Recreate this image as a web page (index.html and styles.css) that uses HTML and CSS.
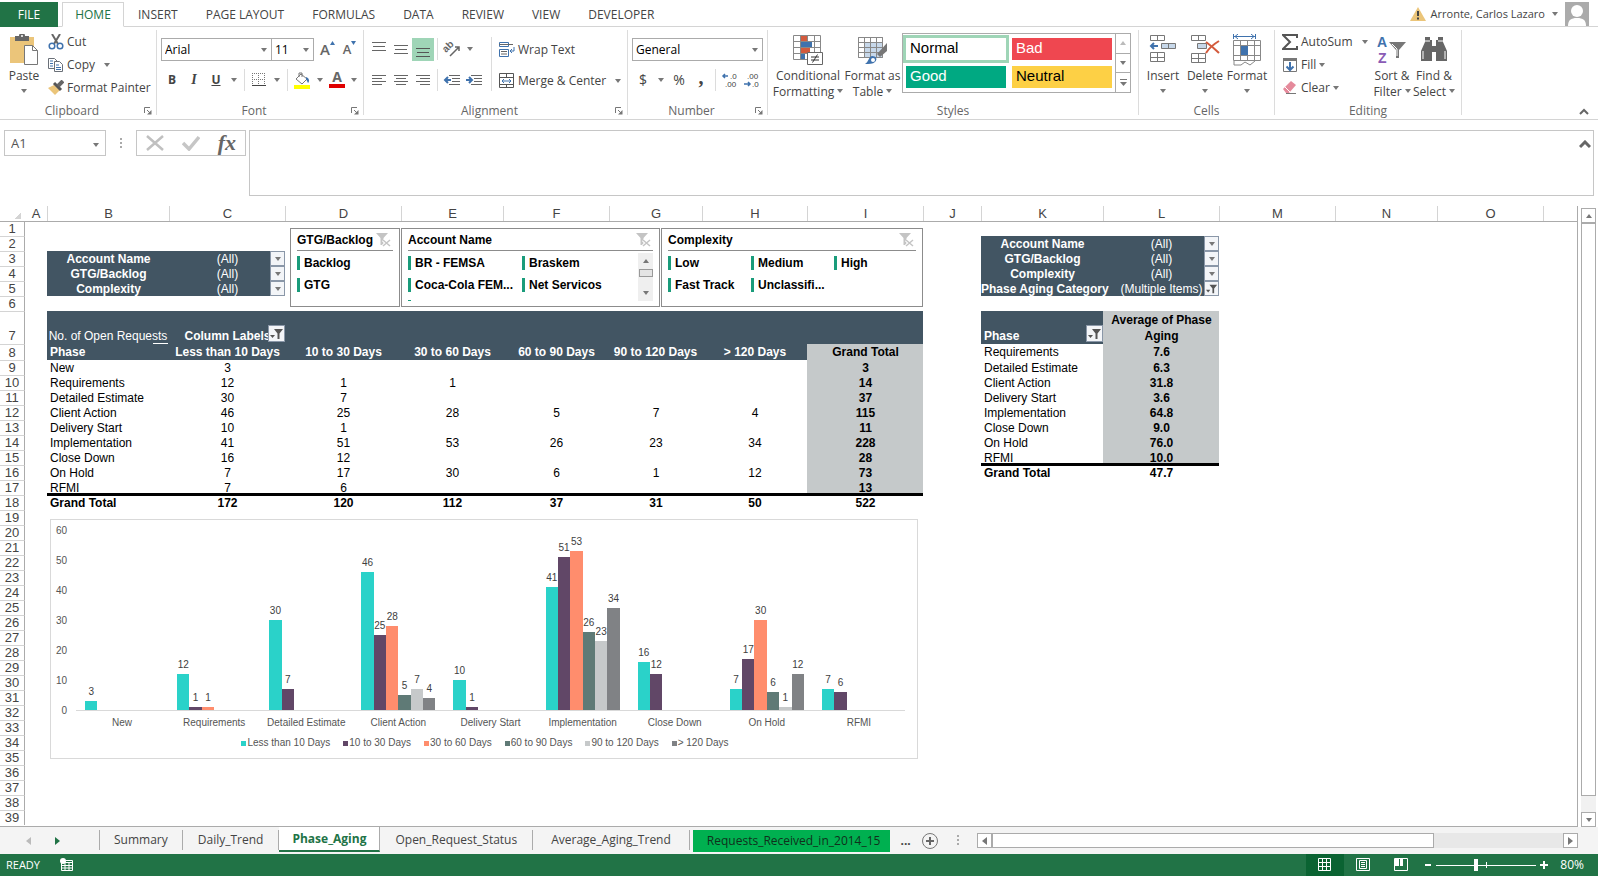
FILE: index.html
```
<!DOCTYPE html>
<html lang="en">
<head>
    <meta charset="UTF-8">
    <title>Phase_Aging</title>
    <link rel="stylesheet" href="styles.css">
</head>
<body>
<!-- shared icons -->
<svg class="sprite" aria-hidden="true">
    <symbol id="launcher" viewBox="0 0 8 8"><path d="M.5 6V.5H6M3 3l3 3" fill="none" stroke="#777"/><path d="M7.500 3v4.500H3z" fill="#777"/></symbol>
    <symbol id="funnel" viewBox="0 0 14 14"><path d="M4 2h9L9.500 6.500V12h-2V6.500z" fill="#555"/><path d="M0 8h5L2.500 11z" fill="#555"/></symbol>
    <symbol id="clear" viewBox="0 0 16 16"><path d="M1 1h12L8.500 6v7h-3V6z" fill="#c4c4c4"/><path d="M8 8l7 6M15 8l-7 6" stroke="#fff" stroke-width="3"/><path d="M8 8l7 6M15 8l-7 6" stroke="#c4c4c4" stroke-width="1.500"/></symbol>
</svg>

<header class="tabs">
    <button class="tab file">FILE</button>
    <button class="tab home">HOME</button>
    <button class="tab">INSERT</button>
    <button class="tab">PAGE LAYOUT</button>
    <button class="tab">FORMULAS</button>
    <button class="tab">DATA</button>
    <button class="tab">REVIEW</button>
    <button class="tab">VIEW</button>
    <button class="tab">DEVELOPER</button>
    <div class="user">
        <svg width="16" height="14" viewBox="0 0 16 14"><path d="M8 0l8 14H0z" fill="#ebc57a"/><path d="M8 4v5M8 10.500v2" stroke="#444" stroke-width="2"/></svg>
        <button class="account">Arronte, Carlos Lazaro<i class="arr"></i></button>
        <svg width="24" height="24" viewBox="0 0 24 24"><path d="M0 0h24v24H0z" fill="#ababab"/><circle cx="12" cy="9" r="6" fill="#fff"/><path d="M3 24c0-6 3-8 9-8s9 2 9 8z" fill="#fff"/></svg>
    </div>
</header>

<div class="ribbon">
    <section class="group clipboard">
        <div class="body">
            <button class="big paste">
                <svg width="32" height="32" viewBox="0 0 32 32"><path d="M2 3h24v26H2z" fill="#ebc57a"/><path d="M7 2h4a3 3 0 0 1 6 0h4v5H7z" fill="#666"/><circle cx="14" cy="2" r="1" fill="#fff"/><path d="M16.500 11.500h8l5 5v14h-13z" fill="#fff" stroke="#777"/><path d="M24.500 11.500v5h5" fill="none" stroke="#777"/></svg>
                <span>Paste</span><i class="arr"></i>
            </button>
            <div class="stack">
                <button class="small"><svg width="16" height="16" viewBox="0 0 16 16"><path d="M4 0l6 10M12 0L6 10" stroke="#666" stroke-width="2"/><g fill="none" stroke="#3f72ad" stroke-width="1.500"><circle cx="4" cy="12" r="2.800"/><circle cx="12" cy="12" r="2.800"/></g></svg>Cut</button>
                <button class="small"><svg width="16" height="16" viewBox="0 0 16 16"><g fill="#fff" stroke="#6a7078"><path d="M.5 1.500h6l3 3v7h-9z"/><path d="M6.500 4.500h5l3 3v7h-8z"/></g><path d="M2 4h3M2 6.500h3M2 9h3M8 8h3M8 10.500h5M8 12.500h5" stroke="#3f72ad"/></svg>Copy<i class="arr"></i></button>
                <button class="small"><svg width="16" height="16" viewBox="0 0 16 16"><path d="M6 5l6 5-5 5L0 8z" fill="#ebc57a"/><path d="M6 3l7 7" stroke="#555" stroke-width="3"/><path d="M10 6l5-5" stroke="#666" stroke-width="4"/></svg>Format Painter</button>
            </div>
        </div>
        <div class="title"><span>Clipboard</span><button class="launch" aria-label="Clipboard options"><svg width="8" height="8"><use href="#launcher"/></svg></button></div>
    </section>

    <section class="group font">
        <div class="body lines">
            <div class="line">
                <select class="combo face" aria-label="Font"><option>Arial</option></select>
                <select class="combo size" aria-label="Font size"><option>11</option></select>
                <button class="tool grow">A<svg width="5" height="4"><path d="M0 4l2.500-4L5 4z" fill="#3f72ad"/></svg></button>
                <button class="tool shrink">A<svg width="5" height="4"><path d="M0 0h5L2.500 4z" fill="#3f72ad"/></svg></button>
            </div>
            <div class="line">
                <button class="tool bold">B</button>
                <button class="tool italic">I</button>
                <button class="tool under">U</button>
                <button class="drop" aria-label="Underline style"><i class="arr"></i></button>
                <i class="sep"></i>
                <button class="tool" aria-label="Borders"><svg width="14" height="14" viewBox="0 0 14 14"><path d="M.5 0v13M6.500 0v13M12.500 0v13M0 .5h13M0 6.500h13" stroke="#777" stroke-dasharray="1 1"/><path d="M0 12.500h14" stroke="#444"/></svg></button>
                <button class="drop" aria-label="More borders"><i class="arr"></i></button>
                <i class="sep"></i>
                <button class="tool" aria-label="Fill color"><svg width="18" height="17" viewBox="0 0 18 17"><path d="M8 2l6 5-5 5-6-5zM6 5V1h3v4" fill="#fff" stroke="#777"/><path d="M13 5c3 1 4 4 2 6l-2-4z" fill="#3f72ad"/><path d="M1 13h16v4H1z" fill="#ff0"/></svg></button>
                <button class="drop" aria-label="More fills"><i class="arr"></i></button>
                <button class="tool fontcolor">A</button>
                <button class="drop" aria-label="More font colors"><i class="arr"></i></button>
            </div>
        </div>
        <div class="title"><span>Font</span><button class="launch" aria-label="Font options"><svg width="8" height="8"><use href="#launcher"/></svg></button></div>
    </section>

    <section class="group align">
        <div class="body">
            <div class="lines">
                <div class="line">
                    <button class="tool" aria-label="Top align"><svg width="14" height="14"><path d="M0 .5h14M1 4.500h12M0 8.500h14" stroke="#666"/></svg></button>
                    <button class="tool" aria-label="Middle align"><svg width="14" height="14"><path d="M0 3.500h14M1 7.500h12M0 11.500h14" stroke="#666"/></svg></button>
                    <button class="tool on" aria-label="Bottom align"><svg width="14" height="14"><path d="M0 5.500h14M1 9.500h12M0 13.500h14" stroke="#555"/></svg></button>
                    <i class="sep"></i>
                    <button class="tool" aria-label="Orientation"><svg width="22" height="22" viewBox="0 0 22 22"><text x="5" y="15" transform="rotate(-45 5 15)" font-family="Liberation Sans" font-size="10" font-weight="bold" fill="#666">ab</text><path d="M9 18l9-9M14 9h4v4" fill="none" stroke="#666" stroke-width="1.500"/></svg></button>
                    <button class="drop" aria-label="More orientations"><i class="arr"></i></button>
                </div>
                <div class="line">
                    <button class="tool" aria-label="Align left"><svg width="14" height="12"><path d="M0 1.500h14M0 4.500h10M0 7.500h14M0 10.500h10" stroke="#666"/></svg></button>
                    <button class="tool" aria-label="Center"><svg width="14" height="12"><path d="M0 1.500h14M2 4.500h10M0 7.500h14M2 10.500h10" stroke="#666"/></svg></button>
                    <button class="tool" aria-label="Align right"><svg width="14" height="12"><path d="M0 1.500h14M4 4.500h10M0 7.500h14M4 10.500h10" stroke="#666"/></svg></button>
                    <i class="sep"></i>
                    <button class="tool" aria-label="Decrease indent"><svg width="16" height="12"><path d="M5 1.500h11M8 4.500h8M8 7.500h8M5 10.500h11" stroke="#666"/><path d="M1 6h6M4 3L1 6l3 3" fill="none" stroke="#3f72ad" stroke-width="2"/></svg></button>
                    <button class="tool" aria-label="Increase indent"><svg width="16" height="12"><path d="M5 1.500h11M8 4.500h8M8 7.500h8M5 10.500h11" stroke="#666"/><path d="M0 6h6M3 3l3 3-3 3" fill="none" stroke="#3f72ad" stroke-width="2"/></svg></button>
                </div>
            </div>
            <i class="sep tall"></i>
            <div class="lines wrapcol">
                <button class="small"><svg width="16" height="16" viewBox="0 0 16 16"><path d="M.5.500h9v4h-9zM.5 7.500h9v7h-9z" fill="#fff" stroke="#3f72ad"/><path d="M0 2.500h14M2 9.500h6M2 12h6" stroke="#666"/><path d="M15 5v4h-4M13 7l-2 2 2 2" fill="none" stroke="#3f72ad"/></svg>Wrap Text</button>
                <button class="small"><svg width="16" height="16" viewBox="0 0 16 16"><path d="M.5.500h14v14H.5zM0 4.500h15M0 11.500h15M7.500 0v4M7.500 11v4" fill="none" stroke="#555"/><path d="M3 8h9M5 6L3 8l2 2M10 6l2 2-2 2" fill="none" stroke="#3f72ad"/></svg>Merge &amp; Center<i class="arr"></i></button>
            </div>
        </div>
        <div class="title"><span>Alignment</span><button class="launch" aria-label="Alignment options"><svg width="8" height="8"><use href="#launcher"/></svg></button></div>
    </section>

    <section class="group number">
        <div class="body lines">
            <div class="line"><select class="combo format" aria-label="Number format"><option>General</option></select></div>
            <div class="line">
                <button class="tool sign">$</button>
                <button class="drop" aria-label="Currencies"><i class="arr"></i></button>
                <button class="tool sign">%</button>
                <button class="tool comma">,</button>
                <i class="sep"></i>
                <button class="tool" aria-label="Increase decimal"><svg width="16" height="16" viewBox="0 0 16 16"><path d="M1 4h5M3 2L1 4l2 2" fill="none" stroke="#3f72ad" stroke-width="1.500"/><g font-family="Liberation Sans" font-size="8" fill="#444"><text x="8" y="7">.0</text><text x="3" y="15">.00</text></g></svg></button>
                <button class="tool" aria-label="Decrease decimal"><svg width="16" height="16" viewBox="0 0 16 16"><path d="M0 12h6M4 10l2 2-2 2" fill="none" stroke="#3f72ad" stroke-width="1.500"/><g font-family="Liberation Sans" font-size="8" fill="#444"><text x="3" y="7">.00</text><text x="8" y="15">.0</text></g></svg></button>
            </div>
        </div>
        <div class="title"><span>Number</span><button class="launch" aria-label="Number options"><svg width="8" height="8"><use href="#launcher"/></svg></button></div>
    </section>

    <section class="group styles">
        <div class="body">
            <button class="big cond">
                <svg width="30" height="32" viewBox="0 0 30 32"><path d="M.5 1.500h27v24H.5zM0 7.500h28M0 13.500h28M0 19.500h28M7.500 1v24M14.500 1v24M21.500 1v24" fill="#fff" stroke="#888"/><path d="M8 2h6v5H8zM8 14h9v5H8z" fill="#d35b3d"/><path d="M8 8h11v5H8zM8 20h4v5H8z" fill="#3f72ad"/><path d="M14.500 18.500h15v12h-15z" fill="#fff" stroke="#666"/><path d="M18 23h8M18 26h8M24.500 20.500l-5 8" stroke="#333"/></svg>
                <span>Conditional<br>Formatting<i class="arr"></i></span>
            </button>
            <button class="big astable">
                <svg width="30" height="32" viewBox="0 0 30 32"><path d="M.5 3.500h24v20H.5z" fill="#fff" stroke="#888"/><path d="M7 8h18v15H7z" fill="#c7d8ea"/><path d="M.5 3.500h24v20H.5zM0 8.500h24M0 13.500h24M0 18.500h24M6.500 3v20M12.500 3v20M18.500 3v20" fill="none" stroke="#888"/><path d="M29 9v8l-7 6-3-3z" fill="#777"/><path d="M7 30c4-2 3-7 7-8 4 0 6 3 3 6-2 2-6 2-10 2z" fill="#3f72ad"/><circle cx="15" cy="26" r="2" fill="#fff"/></svg>
                <span>Format as<br>Table<i class="arr"></i></span>
            </button>
            <div class="gallery">
                <div class="swatches">
                    <button class="swatch normal">Normal</button>
                    <button class="swatch bad">Bad</button>
                    <button class="swatch good">Good</button>
                    <button class="swatch neutral">Neutral</button>
                </div>
                <div class="gscroll">
                    <button aria-label="Previous styles"><i class="arr up pale"></i></button>
                    <button aria-label="Next styles"><i class="arr"></i></button>
                    <button aria-label="More styles"><svg width="7" height="7"><path d="M0 .5h7" stroke="#777"/><path d="M0 3h7L3.500 7z" fill="#777"/></svg></button>
                </div>
            </div>
        </div>
        <div class="title"><span>Styles</span></div>
    </section>

    <section class="group cells">
        <div class="body">
            <button class="big">
                <svg width="28" height="32" viewBox="0 0 28 32"><path d="M1.500 1.500h14v5h-14zM8.500 1v5M1.500 18.500h14v9h-14zM1 23.500h14M8.500 18v9" fill="#fff" stroke="#777"/><path d="M12.500 9.500h14v5h-14zM19.500 9v5" fill="#c7d8ea" stroke="#777"/><path d="M2 12h7M5 9l-3 3 3 3" fill="none" stroke="#3f72ad" stroke-width="2"/></svg>
                <span>Insert</span><i class="arr"></i>
            </button>
            <button class="big">
                <svg width="30" height="32" viewBox="0 0 30 32"><path d="M1.500 1.500h14v5h-14zM8.500 1v5M1.500 19.500h14v9h-14zM1 24.500h14M8.500 19v9" fill="#fff" stroke="#777"/><path d="M7.500 9.500h9v5h-9z" fill="#c7d8ea" stroke="#777"/><path d="M16 8c4 3 9 7 13 11M29 7c-5 3-10 7-13 12" fill="none" stroke="#d35b3d" stroke-width="2"/></svg>
                <span>Delete</span><i class="arr"></i>
            </button>
            <button class="big">
                <svg width="30" height="32" viewBox="0 0 30 32"><path d="M1.500 0v5M23.500 0v5M2 2.500h21M6 0L3 2.500 6 5M19 0l3 2.500L19 5" fill="none" stroke="#3f72ad"/><path d="M1.500 6.500h27v20h-27zM1 11.500h27M1 21.500h27M8.500 6v20M15.500 6v20M22.500 6v20M2 27v4h7l4-3 5 3 5-4" fill="#fff" stroke="#888"/><path d="M9 12h7v9H9z" fill="#3f72ad"/></svg>
                <span>Format</span><i class="arr"></i>
            </button>
        </div>
        <div class="title"><span>Cells</span></div>
    </section>

    <section class="group editing">
        <div class="body">
            <div class="stack">
                <button class="small sum"><svg width="16" height="16" viewBox="0 0 16 16"><path d="M15 4V1H1l7 7-7 7h14v-3" fill="none" stroke="#555" stroke-width="2"/></svg>AutoSum<i class="arr"></i></button>
                <button class="small"><svg width="16" height="16" viewBox="0 0 16 16"><path d="M1.500 1.500h13v13h-13z" fill="#fff" stroke="#777"/><path d="M1 1h14v3H1z" fill="#777"/><path d="M8 5v8M4.500 9.500L8 13l3.500-3.500" fill="none" stroke="#3f72ad" stroke-width="2"/></svg>Fill<i class="arr"></i></button>
                <button class="small"><svg width="16" height="16" viewBox="0 0 16 16"><path d="M9 1l5 4-7 8H4L1 9z" fill="#e58a9b"/><path d="M3 7l5 5" stroke="#fff"/><path d="M4 13.500h10" stroke="#777"/></svg>Clear<i class="arr"></i></button>
            </div>
            <button class="big">
                <svg width="30" height="32" viewBox="0 0 30 32"><g font-family="Liberation Sans" font-size="14" font-weight="bold"><text x="0" y="13" fill="#3f72ad">A</text><text x="1" y="29" fill="#8a5bb5">Z</text></g><path d="M12 8h17l-7 8v8h-3v-8z" fill="#777"/><path d="M15 10l5 5v7" fill="none" stroke="#fff"/></svg>
                <span>Sort &amp;<br>Filter<i class="arr"></i></span>
            </button>
            <button class="big">
                <svg width="28" height="32" viewBox="0 0 28 32"><path d="M5 3h5v3h2v6h4V6h2V3h5v5l4 9v10H16v-9h-4v9H1V17l4-9z" fill="#666"/><path d="M5 7h5M18 7h5M3 17v8M25 17v8" stroke="#fff"/></svg>
                <span>Find &amp;<br>Select<i class="arr"></i></span>
            </button>
        </div>
        <div class="title"><span>Editing</span></div>
    </section>
    <button class="collapse" aria-label="Collapse the ribbon"><svg width="10" height="7"><path d="M1 6l4-4 4 4" fill="none" stroke="#666" stroke-width="2"/></svg></button>
</div>

<div class="formula">
    <div class="namebox"><input type="text" value="A1" aria-label="Name box"><button aria-label="Names"><i class="arr"></i></button></div>
    <i class="dots"></i>
    <div class="fx">
        <button aria-label="Cancel"><svg width="18" height="16"><path d="M1 1l16 14M17 1L1 15" stroke="#c0c0c0" stroke-width="2.500"/></svg></button>
        <button aria-label="Enter"><svg width="18" height="16"><path d="M1 8l6 6L17 2" fill="none" stroke="#c6c6c6" stroke-width="3.500"/></svg></button>
        <button class="fn">fx</button>
    </div>
    <div class="entry">
        <textarea aria-label="Formula bar"></textarea>
        <button aria-label="Collapse formula bar"><svg width="12" height="9"><path d="M1 7l5-5 5 5" fill="none" stroke="#666" stroke-width="3"/></svg></button>
    </div>
</div>

<main class="work">
    <div class="sheet">
        <table class="grid">
            <colgroup>
                <col class="w-head"><col class="w-a"><col class="w-b"><col class="w-c"><col class="w-c"><col class="w-e"><col class="w-f"><col class="w-g"><col class="w-h"><col class="w-i"><col class="w-j"><col class="w-b"><col class="w-c"><col class="w-c"><col class="w-e"><col class="w-f"><col>
            </colgroup>
            <thead>
            <tr><th class="corner"></th><th class="first">A</th><th>B</th><th>C</th><th>D</th><th>E</th><th>F</th><th>G</th><th>H</th><th>I</th><th>J</th><th>K</th><th>L</th><th>M</th><th>N</th><th>O</th><th></th></tr>
            </thead>
            <tbody>
            <tr class="top"><th>1</th><td colspan="16"></td></tr>
            <tr><th>2</th><td colspan="10"></td><td class="dk b">Account Name</td><td class="dk">(All)<button class="pick" aria-label="Filter"><i class="arr"></i></button></td><td colspan="4"></td></tr>
            <tr><th>3</th><td></td><td class="dk b">Account Name</td><td class="dk">(All)<button class="pick" aria-label="Filter"><i class="arr"></i></button></td><td colspan="7"></td><td class="dk b">GTG/Backlog</td><td class="dk">(All)<button class="pick" aria-label="Filter"><i class="arr"></i></button></td><td colspan="4"></td></tr>
            <tr><th>4</th><td></td><td class="dk b">GTG/Backlog</td><td class="dk">(All)<button class="pick" aria-label="Filter"><i class="arr"></i></button></td><td colspan="7"></td><td class="dk b">Complexity</td><td class="dk">(All)<button class="pick" aria-label="Filter"><i class="arr"></i></button></td><td colspan="4"></td></tr>
            <tr><th>5</th><td></td><td class="dk b">Complexity</td><td class="dk">(All)<button class="pick" aria-label="Filter"><i class="arr"></i></button></td><td colspan="7"></td><td class="dk b tight over">Phase Aging Category</td><td class="dk">(Multiple Items)<button class="pick" aria-label="Filter"><svg width="12" height="12"><use href="#funnel"/></svg></button></td><td colspan="4"></td></tr>
            <tr><th>6</th><td colspan="16"></td></tr>
            <tr class="r7"><th>7</th><td></td><td class="dk tight mark">No. of Open Requests</td><td class="dk b">Column Labels<button class="pick wide" aria-label="Filter columns"><svg width="14" height="14"><use href="#funnel"/></svg></button></td><td class="dk" colspan="6"></td><td></td><td class="dk b l">Phase<button class="pick wide" aria-label="Filter phases"><svg width="14" height="14"><use href="#funnel"/></svg></button></td><td class="gr b">Average of Phase<br>Aging</td><td colspan="4"></td></tr>
            <tr class="r8"><th>8</th><td></td><td class="dk b l">Phase</td><td class="dk b">Less than 10 Days</td><td class="dk b">10 to 30 Days</td><td class="dk b">30 to 60 Days</td><td class="dk b">60 to 90 Days</td><td class="dk b tight">90 to 120 Days</td><td class="dk b">&gt; 120 Days</td><td class="gr b">Grand Total</td><td></td><td class="l">Requirements</td><td class="gr b">7.6</td><td colspan="4"></td></tr>
            <tr><th>9</th><td></td><td class="l">New</td><td>3</td><td></td><td></td><td></td><td></td><td></td><td class="gr b">3</td><td></td><td class="l">Detailed Estimate</td><td class="gr b">6.3</td><td colspan="4"></td></tr>
            <tr><th>10</th><td></td><td class="l">Requirements</td><td>12</td><td>1</td><td>1</td><td></td><td></td><td></td><td class="gr b">14</td><td></td><td class="l">Client Action</td><td class="gr b">31.8</td><td colspan="4"></td></tr>
            <tr><th>11</th><td></td><td class="l">Detailed Estimate</td><td>30</td><td>7</td><td></td><td></td><td></td><td></td><td class="gr b">37</td><td></td><td class="l">Delivery Start</td><td class="gr b">3.6</td><td colspan="4"></td></tr>
            <tr><th>12</th><td></td><td class="l">Client Action</td><td>46</td><td>25</td><td>28</td><td>5</td><td>7</td><td>4</td><td class="gr b">115</td><td></td><td class="l">Implementation</td><td class="gr b">64.8</td><td colspan="4"></td></tr>
            <tr><th>13</th><td></td><td class="l">Delivery Start</td><td>10</td><td>1</td><td></td><td></td><td></td><td></td><td class="gr b">11</td><td></td><td class="l">Close Down</td><td class="gr b">9.0</td><td colspan="4"></td></tr>
            <tr><th>14</th><td></td><td class="l">Implementation</td><td>41</td><td>51</td><td>53</td><td>26</td><td>23</td><td>34</td><td class="gr b">228</td><td></td><td class="l">On Hold</td><td class="gr b">76.0</td><td colspan="4"></td></tr>
            <tr><th>15</th><td></td><td class="l">Close Down</td><td>16</td><td>12</td><td></td><td></td><td></td><td></td><td class="gr b">28</td><td></td><td class="l last">RFMI</td><td class="gr b last">10.0</td><td colspan="4"></td></tr>
            <tr><th>16</th><td></td><td class="l">On Hold</td><td>7</td><td>17</td><td>30</td><td>6</td><td>1</td><td>12</td><td class="gr b">73</td><td></td><td class="l b sum">Grand Total</td><td class="b sum">47.7</td><td colspan="4"></td></tr>
            <tr><th>17</th><td></td><td class="l last">RFMI</td><td class="last">7</td><td class="last">6</td><td class="last"></td><td class="last"></td><td class="last"></td><td class="last"></td><td class="gr b last">13</td><td colspan="7"></td></tr>
            <tr><th>18</th><td></td><td class="l b sum">Grand Total</td><td class="b sum">172</td><td class="b sum">120</td><td class="b sum">112</td><td class="b sum">37</td><td class="b sum">31</td><td class="b sum">50</td><td class="b sum">522</td><td colspan="7"></td></tr>
            <tr><th>19</th><td colspan="16"></td></tr>
            <tr><th>20</th><td colspan="16"></td></tr>
            <tr><th>21</th><td colspan="16"></td></tr>
            <tr><th>22</th><td colspan="16"></td></tr>
            <tr><th>23</th><td colspan="16"></td></tr>
            <tr><th>24</th><td colspan="16"></td></tr>
            <tr><th>25</th><td colspan="16"></td></tr>
            <tr><th>26</th><td colspan="16"></td></tr>
            <tr><th>27</th><td colspan="16"></td></tr>
            <tr><th>28</th><td colspan="16"></td></tr>
            <tr><th>29</th><td colspan="16"></td></tr>
            <tr><th>30</th><td colspan="16"></td></tr>
            <tr><th>31</th><td colspan="16"></td></tr>
            <tr><th>32</th><td colspan="16"></td></tr>
            <tr><th>33</th><td colspan="16"></td></tr>
            <tr><th>34</th><td colspan="16"></td></tr>
            <tr><th>35</th><td colspan="16"></td></tr>
            <tr><th>36</th><td colspan="16"></td></tr>
            <tr><th>37</th><td colspan="16"></td></tr>
            <tr><th>38</th><td colspan="16"></td></tr>
            <tr><th>39</th><td colspan="16"></td></tr>
            </tbody>
        </table>

        <!-- slicers float over the cells -->
        <div class="slicer s-gtg">
            <h3>GTG/Backlog<svg width="16" height="16"><use href="#clear"/></svg></h3>
            <div class="items"><button>Backlog</button><button>GTG</button></div>
        </div>
        <div class="slicer s-acc">
            <h3>Account Name<svg width="16" height="16"><use href="#clear"/></svg></h3>
            <div class="scroller">
                <div class="items"><button>BR - FEMSA</button><button>Braskem</button><button>Coca-Cola FEM...</button><button>Net Servicos</button><i class="peek"></i></div>
                <div class="mini"><i class="arr up"></i><i class="knob"></i><i class="arr"></i></div>
            </div>
        </div>
        <div class="slicer s-cpx">
            <h3>Complexity<svg width="16" height="16"><use href="#clear"/></svg></h3>
            <div class="items"><button>Low</button><button>Medium</button><button>High</button><button>Fast Track</button><button>Unclassifi...</button></div>
        </div>

        <div class="chart">
            <div class="area">
                <div class="axis"><span>60</span><span>50</span><span>40</span><span>30</span><span>20</span><span>10</span><span>0</span></div>
                <div class="plot" id="plot"></div>
            </div>
            <div class="names" id="names"></div>
            <div class="legend" id="legend"></div>
        </div>
    </div>
    <div class="vscroll">
        <button aria-label="Scroll up"><i class="arr up"></i></button>
        <i class="thumb"></i>
        <button aria-label="Scroll down"><i class="arr"></i></button>
    </div>
</main>

<nav class="sheets">
    <button class="nav" aria-label="Previous sheet"><i class="tri left"></i></button>
    <button class="nav" aria-label="Next sheet"><i class="tri right"></i></button>
    <button class="sh lead">Summary</button>
    <button class="sh">Daily_Trend</button>
    <button class="sh active">Phase_Aging</button>
    <button class="sh">Open_Request_Status</button>
    <button class="sh wide">Average_Aging_Trend</button>
    <button class="sh green">Requests_Received_in_2014_15</button>
    <button class="dotsmore">...</button>
    <button class="add" aria-label="New sheet"><svg width="18" height="18"><circle cx="9" cy="9" r="7.500" fill="none" stroke="#777"/><path d="M9 5v8M5 9h8" stroke="#666" stroke-width="2"/></svg></button>
    <i class="dots"></i>
    <div class="hscroll">
        <button aria-label="Scroll left"><i class="tri left"></i></button>
        <i class="thumb"></i>
        <button aria-label="Scroll right"><i class="tri right"></i></button>
    </div>
</nav>

<footer class="status">
    <span>READY</span>
    <svg class="macro" width="14" height="14" viewBox="0 0 14 14"><path d="M1.500 4.500h11v8h-11zM2 7.500h10M2 10h10M5 5v8M9 5v8M6 2.500h6.500V5" fill="none" stroke="#fff"/><circle cx="3" cy="3" r="3" fill="#fff"/></svg>
    <div class="views">
        <button class="on" aria-label="Normal view"><svg width="14" height="14"><path d="M.5.500h12v12H.5zM4.500 0v13M8.500 0v13M0 4.500h13M0 8.500h13" fill="none" stroke="#fff"/></svg></button>
        <button aria-label="Page layout view"><svg width="14" height="14"><path d="M.5.500h13v12H.5zM3.500 2.500h7v8h-7zM5 4.500h4M5 6.500h4M5 8.500h4" fill="none" stroke="#fff"/></svg></button>
        <button aria-label="Page break view"><svg width="14" height="14"><path d="M.5.500h13v12H.5z" fill="none" stroke="#fff"/><path d="M1 1h4v7H1zM6 1h3v7H6z" fill="#fff"/></svg></button>
    </div>
    <button class="step" aria-label="Zoom out"><svg width="8" height="8"><path d="M1 4h6" stroke="#fff" stroke-width="2"/></svg></button>
    <input class="zoom" type="range" min="0" max="100" value="39" aria-label="Zoom">
    <button class="step" aria-label="Zoom in"><svg width="8" height="8"><path d="M0 4h8M4 0v8" stroke="#fff" stroke-width="2"/></svg></button>
    <span class="pct">80%</span>
</footer>

<script>
    // open requests per phase, one value for each age band
    var bands = ["Less than 10 Days", "10 to 30 Days", "30 to 60 Days", "60 to 90 Days", "90 to 120 Days", "> 120 Days"];
    var phases = [
        {name: "New", values: [3, 0, 0, 0, 0, 0]},
        {name: "Requirements", values: [12, 1, 1, 0, 0, 0]},
        {name: "Detailed Estimate", values: [30, 7, 0, 0, 0, 0]},
        {name: "Client Action", values: [46, 25, 28, 5, 7, 4]},
        {name: "Delivery Start", values: [10, 1, 0, 0, 0, 0]},
        {name: "Implementation", values: [41, 51, 53, 26, 23, 34]},
        {name: "Close Down", values: [16, 12, 0, 0, 0, 0]},
        {name: "On Hold", values: [7, 17, 30, 6, 1, 12]},
        {name: "RFMI", values: [7, 6, 0, 0, 0, 0]}
    ];
    var max = 60;
    var plot = document.getElementById("plot");
    var names = document.getElementById("names");
    var legend = document.getElementById("legend");

    function add(parent, tag, cls, text) {
        var el = document.createElement(tag);
        if (cls) el.className = cls;
        if (text) el.textContent = text;
        parent.appendChild(el);
        return el;
    }

    for (var i = 0; i < phases.length; i++) {
        var cluster = add(plot, "div", "cluster");
        for (var j = 0; j < bands.length; j++) {
            var value = phases[i].values[j];
            var col = add(cluster, "div", "col");
            if (value) {
                add(col, "span", "", String(value));
                add(col, "div", "bar c" + j).style.height = value / max * 100 + "%";
            }
        }
        add(names, "span", "", phases[i].name);
    }
    for (var k = 0; k < bands.length; k++) {
        var item = add(legend, "span", "key");
        add(item, "i", "c" + k);
        item.appendChild(document.createTextNode(bands[k]));
    }
</script>
</body>
</html>
```
FILE: styles.css
```
@charset "UTF-8";
/* reset */
*{box-sizing:border-box;}
body,h3,button,input,select,textarea{margin:0;padding:0;}
body,button,input,select,textarea{font:12px/16px "Open Sans", "Noto Sans", sans-serif;color:#444;}
button{border:0;background:none;white-space:nowrap;cursor:pointer;}
button,input,select,textarea{outline:none;}
svg{display:block;flex:none;}
i{font-style:normal;}
.sprite{position:absolute;width:0;height:0;}

body{
    display:flex;
    flex-direction:column;
    height:100vh;
    overflow:hidden;
    background:#fff;
}
.arr{
    display:inline-block;
    flex:none;
    border:3px solid transparent;
    border-top:4px solid #777;
    border-bottom:0;
}
.arr.up{
    border-top:0;
    border-bottom:4px solid #777;
}
.arr.pale{
    border-bottom-color:#bbb;
}
.tri{
    border:4px solid transparent;
}
.tri.left{
    border-right:5px solid #777;
    border-left:0;
}
.tri.right{
    border-left:5px solid #777;
    border-right:0;
}

/* ribbon tabs */
.tabs{
    display:flex;
    height:27px;
    padding-top:2px;
    border-bottom:1px solid #d4d4d4;
}
.tab{
    height:25px;
    padding:0 14px;
}
.tab.file{
    width:58px;
    padding:0;
    background:#217346;
    color:#fff;
}
.tab.home{
    width:62px;
    height:25px;
    margin-left:4px;
    padding:0;
    border:1px solid #d4d4d4;
    border-bottom:1px solid #fff;
    background:#fff;
    color:#217346;
}
.user{
    display:flex;
    align-items:center;
    gap:5px;
    margin-left:auto;
    padding-right:9px;
}
.account{
    display:flex;
    align-items:center;
    gap:7px;
    margin-right:2px;
    font-size:11px;
}

/* ribbon */
.ribbon{
    display:flex;
    height:93px;
    padding:3px 0 4px;
    border-bottom:1px solid #d4d4d4;
}
.group{
    display:flex;
    flex-direction:column;
    flex:none;
    border-right:1px solid #dcdcdc;
}
.group .body{
    display:flex;
    flex:1;
}
.group .body.lines{
    flex-direction:column;
}
.clipboard{width:157px;}
.font{width:207px;}
.align{width:264px;}
.number{width:140px;}
.styles{width:371px;}
.cells{width:136px;}
.editing{width:187px;}
.title{
    display:flex;
    align-items:center;
    height:16px;
    margin-bottom:-4px;
    color:#666;
}
.title span{
    flex:1;
    text-align:center;
}
.launch{
    width:12px;
    height:16px;
    display:flex;
    align-items:center;
}
.big{
    display:flex;
    flex-direction:column;
    align-items:center;
    width:42px;
    padding-top:4px;
}
.big span{
    margin-top:2px;
}
.big span .arr{
    margin:0 0 3px 3px;
}
.big > .arr{
    margin-top:5px;
}
.paste{width:48px;}
.stack{
    display:flex;
    flex-direction:column;
    align-items:flex-start;
}
.small{
    display:flex;
    align-items:center;
    gap:3px;
    height:23px;
}
.small .arr{
    margin-left:6px;
}
.lines{
    display:flex;
    flex-direction:column;
    gap:9px;
    padding-top:8px;
}
.line{
    display:flex;
    height:22px;
}
.font .body,.number .body,.align .body{
    padding-left:4px;
}
.align .body > .lines{
    width:120px;
}
.align .body > .wrapcol{
    padding:9px 0 0 4px;
}
.wrapcol .small{
    height:22px;
}
.combo{
    height:23px;
    padding-left:3px;
    border:1px solid #ababab;
    border-radius:0;
    appearance:none;
    color:#000;
    background:#fff url("data:image/svg+xml,%3Csvg xmlns='http://www.w3.org/2000/svg' width='6' height='4'%3E%3Cpath d='M0 0h6L3 4z' fill='%23777'/%3E%3C/svg%3E") no-repeat right 4px center;
}
.combo.face{width:111px;}
.combo.size{width:43px;margin-left:-1px;}
.combo.format{width:131px;}
.tool{
    display:flex;
    flex:none;
    align-items:center;
    justify-content:center;
    width:22px;
    height:22px;
}
.tool svg{overflow:visible;}
.tool.on{
    height:23px;
    background:#9fd5b7;
}
.drop{
    display:flex;
    flex:none;
    align-items:center;
    justify-content:center;
    width:14px;
}
.sep{
    flex:none;
    width:7px;
    background:linear-gradient(#dcdcdc,#dcdcdc) center/1px 100% no-repeat;
}
.sep.tall{
    height:54px;
    margin-top:7px;
}
.grow,.shrink{
    align-items:flex-start;
    padding:3px 0 0 5px;
    color:#666;
    font-weight:600;
}
.grow{font-size:15px;}
.shrink{font-size:13px;}
.bold{font-weight:bold;}
.italic{font:italic bold 14px "Liberation Serif", serif;}
.under{font-weight:bold;text-decoration:underline;}
.fontcolor{
    width:16px;
    height:18px;
    margin:1px 2px 0;
    border-bottom:4px solid #e00000;
    font-size:14px;
    font-weight:bold;
    color:#666;
}
.sign{font-size:14px;}
.comma{
    align-items:flex-start;
    font:bold 20px/16px "Liberation Serif", serif;
}
.styles .body{padding-left:5px;}
.cond{width:70px;}
.astable{width:59px;}
.gallery{
    display:flex;
    height:60px;
    margin-top:3px;
    border:1px solid #ababab;
}
.swatches{
    display:grid;
    grid-template-columns:106px 106px;
    grid-template-rows:28px 28px;
    padding-top:1px;
}
.swatch{
    padding:0 0 2px 4px;
    border:3px solid transparent;
    background-clip:padding-box;
    font:15px/20px "Liberation Sans", Arial, sans-serif;
    text-align:left;
}
.swatch.normal{border-color:#9fd5b7;color:#000;}
.swatch.bad{background-color:#ef4750;color:#fff;}
.swatch.good{background-color:#00a982;color:#fff;}
.swatch.neutral{background-color:#fdd045;color:#000;}
.gscroll{
    display:flex;
    flex-direction:column;
    width:15px;
    border-left:1px solid #ababab;
}
.gscroll button{
    display:flex;
    flex:1;
    align-items:center;
    justify-content:center;
}
.gscroll button + button{
    border-top:1px solid #ababab;
}
.cells .body{padding-left:3px;}
.editing .stack{
    width:96px;
    padding-left:7px;
}
.editing .small .arr{margin-left:0;}
.editing .small.sum .arr{margin-left:6px;}
.collapse{
    align-self:flex-end;
    margin:0 9px 0 auto;
}

/* formula bar */
.formula{
    display:flex;
    align-items:flex-start;
    height:86px;
    padding:10px 4px 0;
}
.namebox{
    display:flex;
    align-items:center;
    width:102px;
    height:26px;
    border:1px solid #c6c6c6;
}
.namebox input{
    flex:1;
    min-width:0;
    padding-left:6px;
    border:0;
    font-size:13px;
    color:#555;
}
.namebox button{width:18px;}
.dots{
    width:30px;
    height:10px;
    margin-top:8px;
    background:radial-gradient(circle,#aaa 1px,transparent 1px) center/30px 4px repeat-y;
}
.fx{
    display:flex;
    align-items:center;
    justify-content:space-around;
    width:110px;
    height:26px;
    border:1px solid #c6c6c6;
}
.fx .fn{
    font:italic bold 22px/22px "Liberation Serif", serif;
    color:#666;
}
.entry{
    display:flex;
    align-items:flex-start;
    flex:1;
    height:66px;
    margin-left:3px;
    border:1px solid #c6c6c6;
}
.entry textarea{
    flex:1;
    height:100%;
    border:0;
    resize:none;
}
.entry button{
    padding:9px 2px;
}

/* worksheet */
.work{
    display:flex;
    flex:1;
    min-height:0;
}
.sheet{
    position:relative;
    flex:1;
    min-width:0;
    overflow:hidden;
    border-right:1px solid #ababab;
    border-bottom:1px solid #ababab;
}
.grid{
    width:100%;
    table-layout:fixed;
    border-collapse:separate;
    border-spacing:0;
    font:12px/13px "Liberation Sans", Arial, sans-serif;
    color:#000;
}
.w-head{width:25px;}
.w-a{width:22px;}
.w-b{width:122px;}
.w-c{width:116px;}
.w-e{width:102px;}
.w-f{width:106px;}
.w-g{width:93px;}
.w-h{width:105px;}
.w-i{width:116px;}
.w-j{width:58px;}
.grid th,.grid td{
    height:15px;
    padding:2px 2px 0 3px;
    text-align:center;
    white-space:nowrap;
}
.grid th{
    padding:0;
    font-weight:normal;
    font-size:13px;
    line-height:14px;
    color:#444;
}
.grid thead th{
    border-left:1px solid #d4d4d4;
    line-height:15px;
}
.grid thead .corner,.grid thead .first{
    border-left:0;
}
.grid .corner{
    background:linear-gradient(135deg,transparent 50%,#d4d4d4 50%) 14px 6px/7px 7px no-repeat;
}
.grid tbody th{
    border-top:1px solid #d4d4d4;
    border-right:1px solid #ababab;
}
.grid .top th,.grid .top td{
    border-top:1px solid #ababab;
}
.grid .top td{padding:0;}
.grid .dk{
    position:relative;
    background:#425563;
    color:#fff;
}
.grid .gr{background:#c5c9ca;}
.grid .b{font-weight:bold;}
.grid .l{text-align:left;}
.grid .tight{
    padding-left:0;
    padding-right:0;
}
.grid .over{z-index:1;}
.grid .last{box-shadow:inset 0 -2px #000;}
.grid .sum{box-shadow:inset 0 1px #000;}
.grid .r7 th,.grid .r7 td{
    height:33px;
    padding-top:0;
    line-height:16px;
    vertical-align:bottom;
}
.grid .r8 th,.grid .r8 td{
    height:16px;
    padding-top:1px;
}
.mark::after{
    content:"";
    position:absolute;
    right:1px;
    bottom:0;
    width:15px;
    height:1px;
    background:#fff;
}
.pick{
    position:absolute;
    right:0;
    top:0;
    display:flex;
    align-items:center;
    justify-content:center;
    width:15px;
    height:15px;
    border:1px solid #8a97a8;
    background:#f3f5f8;
}
.pick.wide{
    top:auto;
    bottom:2px;
    width:17px;
    height:17px;
}

/* slicers */
.slicer{
    position:absolute;
    top:22px;
    height:79px;
    padding:3px 6px 0;
    border:1px solid #8c8c8c;
    background:#fff;
    font:bold 12px/16px "Liberation Sans", Arial, sans-serif;
    color:#000;
}
.s-gtg{left:290px;width:110px;}
.s-acc{left:401px;width:259px;}
.s-cpx{left:661px;width:262px;}
.slicer h3{
    display:flex;
    justify-content:space-between;
    height:19px;
    padding-right:2px;
    border-bottom:1px solid #8c8c8c;
    font-size:12px;
}
.items{
    display:grid;
    grid-template-rows:14px 14px;
    gap:8px 0;
    flex:1;
    padding-top:5px;
}
.items button{
    padding-left:4px;
    border-left:3px solid #1a9c7b;
    font:bold 12px/14px "Liberation Sans", Arial, sans-serif;
    text-align:left;
    color:#000;
}
.s-acc .items{grid-template-columns:114px 114px;}
.s-cpx .items{grid-template-columns:83px 83px 83px;}
.scroller{display:flex;}
.peek{
    width:3px;
    height:1px;
    background:#1a9c7b;
}
.mini{
    display:flex;
    flex-direction:column;
    align-items:center;
    justify-content:space-between;
    width:15px;
    height:48px;
    margin-top:2px;
    padding:6px 0;
    background:#efefef;
}
.mini .knob{
    width:14px;
    height:8px;
    margin-bottom:9px;
    border:1px solid #999;
    background:#e4e4e4;
}

/* chart */
.chart{
    position:absolute;
    left:50px;
    top:313px;
    width:868px;
    height:240px;
    padding:5px 12px 0 0;
    border:1px solid #d9d9d9;
    background:#fff;
    font:10px/12px "Liberation Sans", Arial, sans-serif;
    color:#555;
}
.area{display:flex;}
.axis{
    display:flex;
    flex-direction:column;
    justify-content:space-between;
    width:25px;
    height:192px;
    padding-right:9px;
    text-align:right;
}
.plot{
    display:flex;
    flex:1;
    height:181px;
    margin-top:5px;
    border-bottom:1px solid #d9d9d9;
}
.cluster{
    display:flex;
    flex:1;
    padding:0 9px;
}
.col{
    display:flex;
    flex:1;
    min-width:0;
    flex-direction:column;
    align-items:center;
    justify-content:flex-end;
    color:#404040;
}
.col span{margin-bottom:3px;}
.bar{
    flex:none;
    width:100%;
}
.c0{background:#2ad2c9;}
.c1{background:#614767;}
.c2{background:#ff8d6d;}
.c3{background:#5f7a76;}
.c4{background:#c6c9ca;}
.c5{background:#808285;}
.names{
    display:flex;
    margin-left:25px;
}
.names span{
    flex:1;
    text-align:center;
}
.legend{
    display:flex;
    justify-content:center;
    gap:13px;
    margin-top:6px;
    padding-left:14px;
    line-height:16px;
}
.key{
    display:flex;
    align-items:center;
    gap:1px;
}
.key i{
    width:5px;
    height:5px;
}

/* scroll bars */
.vscroll{
    display:flex;
    flex-direction:column;
    width:15px;
    margin:2px 2px 0 3px;
    background:#f1f1f1;
}
.vscroll button,.hscroll button{
    display:flex;
    align-items:center;
    justify-content:center;
    width:15px;
    height:15px;
    border:1px solid #ababab;
    background:#fff;
}
.vscroll .thumb{
    flex:1;
    margin-bottom:16px;
    border:1px solid #ababab;
    background:#fff;
}
.hscroll{
    display:flex;
    flex:1;
    height:15px;
    margin:6px 20px 0 0;
    background:#e8e8e8;
}
.hscroll .thumb{
    flex:1;
    margin-right:129px;
    border:1px solid #ababab;
    background:#fff;
}

/* sheet tabs */
.sheets{
    display:flex;
    height:27px;
    background:#f4f4f4;
}
.nav{
    display:flex;
    align-items:center;
    width:29px;
    padding-left:26px;
}
.nav .left{border-right-color:#bbb;}
.nav .right{border-left-color:#217346;}
.sh{
    height:20px;
    margin-top:3px;
    padding:0 15px;
    border-right:1px solid #ababab;
}
.sh.lead{
    margin-left:41px;
    padding:0 14px;
    border-left:1px solid #ababab;
}
.sh.active{
    height:25px;
    margin:0;
    padding:0 13px;
    border-bottom:2px solid #217346;
    background:#fff;
    font-weight:bold;
    color:#217346;
}
.sh.wide{
    padding:0 18px;
}
.sh.green{
    height:22px;
    margin-left:3px;
    padding:0 10px 0 14px;
    border:0;
    background:#00b050;
    color:#10301c;
}
.dotsmore{
    padding:0 10px;
    font-weight:bold;
}
.sheets .dots{
    width:38px;
}

/* status bar */
.status{
    display:flex;
    align-items:center;
    height:22px;
    padding:0 14px 0 6px;
    background:#217346;
    font-size:11px;
    color:#fff;
}
.macro{margin-left:20px;}
.views{
    display:flex;
    margin-left:auto;
}
.views button{
    display:flex;
    align-items:center;
    justify-content:center;
    width:38px;
    height:22px;
}
.views .on{background:#0a6332;}
.step{
    display:flex;
    justify-content:center;
    width:16px;
}
.zoom{
    width:100px;
    height:14px;
    appearance:none;
    background:linear-gradient(#fff,#fff) center/100% 1px no-repeat,linear-gradient(#fff,#fff) center/1px 6px no-repeat;
}
.zoom::-webkit-slider-thumb{
    appearance:none;
    width:4px;
    height:12px;
    background:#fff;
}
.pct{
    margin-left:8px;
    font-size:12px;
}
```
